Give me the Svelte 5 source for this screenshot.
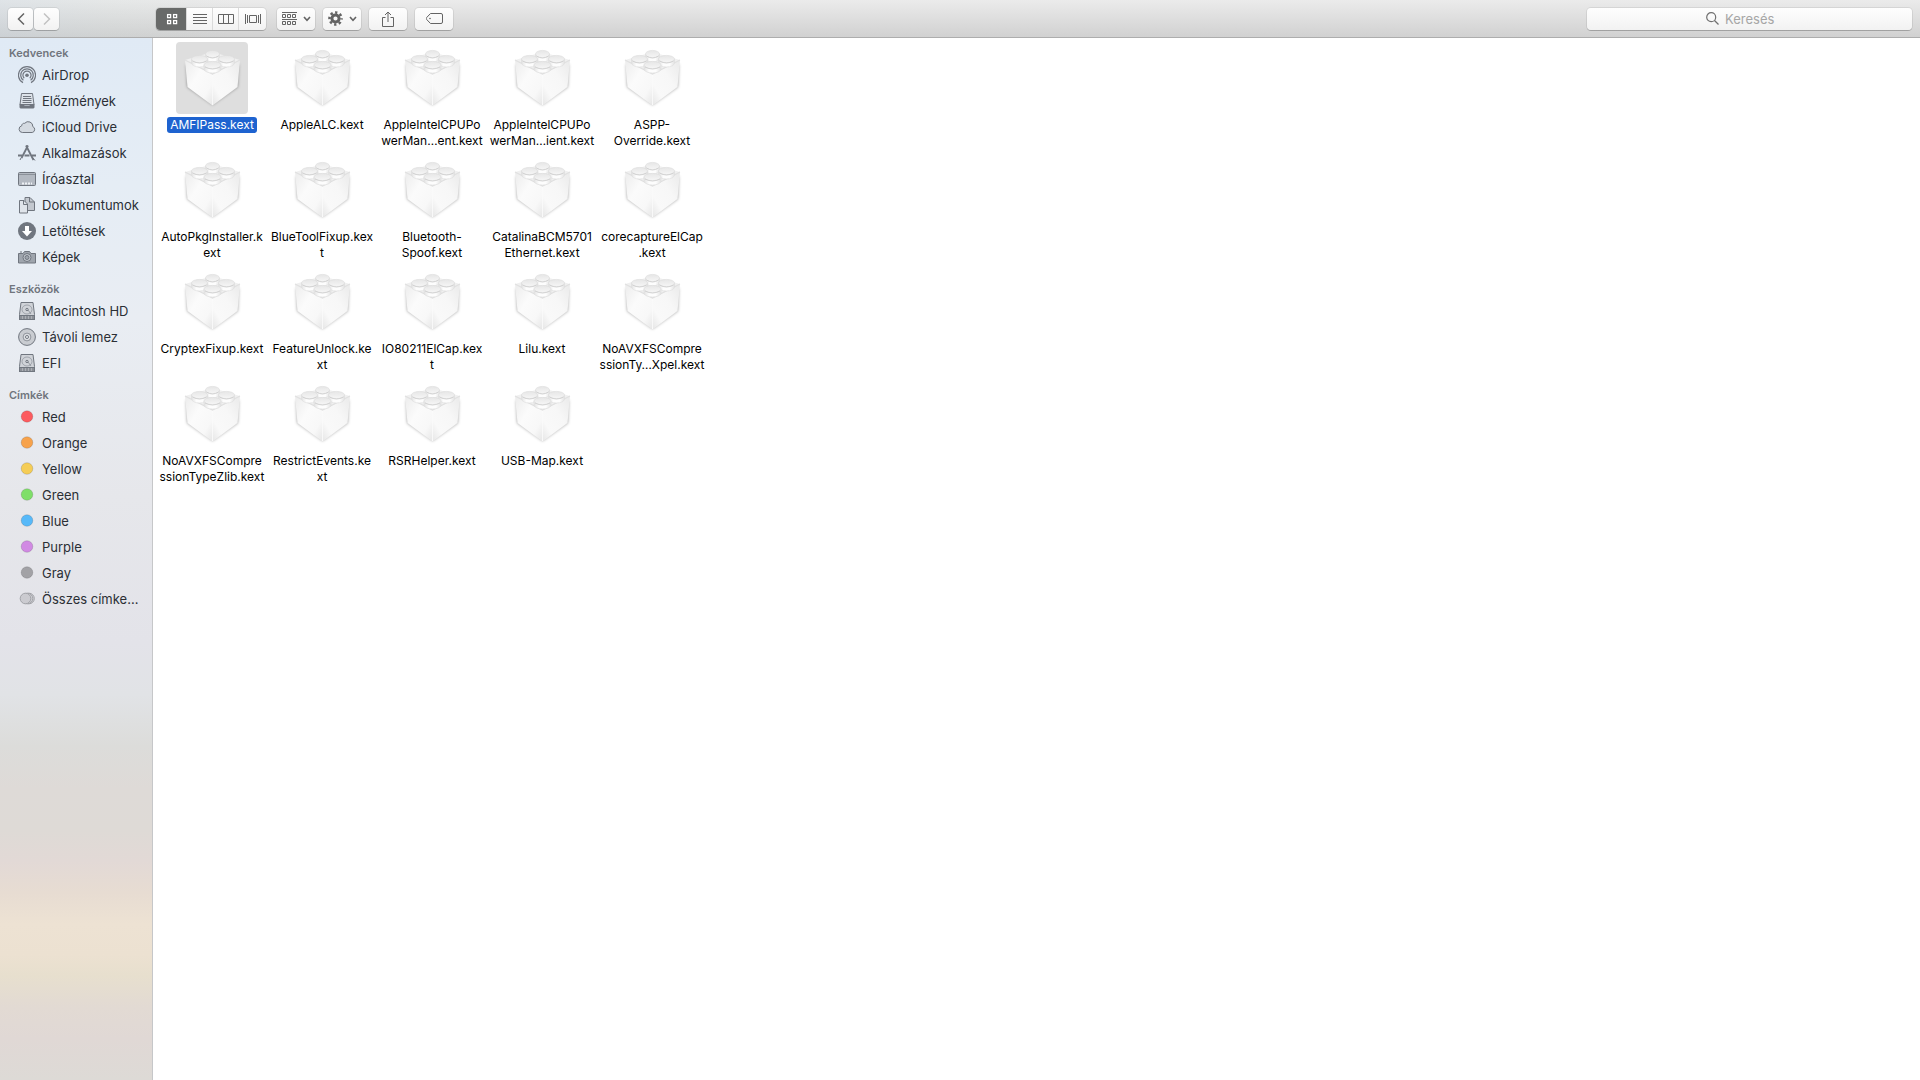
<script lang="ts">
	type Item = { icon: string; label: string; color?: string };
	type Section = { title: string; items: Item[] };

	const sections: Section[] = [
		{
			title: 'Kedvencek',
			items: [
				{ icon: 'airdrop', label: 'AirDrop' },
				{ icon: 'recents', label: 'Előzmények' },
				{ icon: 'cloud', label: 'iCloud Drive' },
				{ icon: 'apps', label: 'Alkalmazások' },
				{ icon: 'desktop', label: 'Íróasztal' },
				{ icon: 'documents', label: 'Dokumentumok' },
				{ icon: 'downloads', label: 'Letöltések' },
				{ icon: 'pictures', label: 'Képek' }
			]
		},
		{
			title: 'Eszközök',
			items: [
				{ icon: 'disk', label: 'Macintosh HD' },
				{ icon: 'disc', label: 'Távoli lemez' },
				{ icon: 'disk', label: 'EFI' }
			]
		},
		{
			title: 'Címkék',
			items: [
				{ icon: 'tag', label: 'Red', color: '#fc5b5f' },
				{ icon: 'tag', label: 'Orange', color: '#f7a24b' },
				{ icon: 'tag', label: 'Yellow', color: '#f5cd56' },
				{ icon: 'tag', label: 'Green', color: '#7fdf69' },
				{ icon: 'tag', label: 'Blue', color: '#57b9f9' },
				{ icon: 'tag', label: 'Purple', color: '#d18ae3' },
				{ icon: 'tag', label: 'Gray', color: '#a2a2a6' },
				{ icon: 'alltags', label: 'Összes címke…' }
			]
		}
	];

	// each file name is already split into the lines it wraps to
	const files: string[][] = [
		['AMFIPass.kext'],
		['AppleALC.kext'],
		['AppleIntelCPUPo', 'werMan…ent.kext'],
		['AppleIntelCPUPo', 'werMan…ient.kext'],
		['ASPP-', 'Override.kext'],
		['AutoPkgInstaller.k', 'ext'],
		['BlueToolFixup.kex', 't'],
		['Bluetooth-', 'Spoof.kext'],
		['CatalinaBCM5701', 'Ethernet.kext'],
		['corecaptureElCap', '.kext'],
		['CryptexFixup.kext'],
		['FeatureUnlock.ke', 'xt'],
		['IO80211ElCap.kex', 't'],
		['Lilu.kext'],
		['NoAVXFSCompre', 'ssionTy…Xpel.kext'],
		['NoAVXFSCompre', 'ssionTypeZlib.kext'],
		['RestrictEvents.ke', 'xt'],
		['RSRHelper.kext'],
		['USB-Map.kext']
	];

	const views = ['icons', 'list', 'columns', 'gallery'];

	let selected = $state(0);
	let view = $state('icons');
	let query = $state('');
</script>

{#snippet chevron()}
	<svg class="chevron" width="8" height="6" viewBox="0 0 8 6">
		<path d="M1 1l3 3.4L7 1" fill="none" stroke="currentColor" stroke-width="1.6" />
	</svg>
{/snippet}

{#snippet viewIcon(name: string)}
	<svg width="16" height="12" viewBox="0 0 16 12" fill="none" stroke="currentColor">
		{#if name === 'icons'}
			<g stroke-width="1.3">
				<rect x="3.6" y="1.6" width="3" height="3" />
				<rect x="9.6" y="1.6" width="3" height="3" />
				<rect x="3.6" y="7.6" width="3" height="3" />
				<rect x="9.6" y="7.6" width="3" height="3" />
			</g>
		{:else if name === 'list'}
			<path d="M1 1.5h14M1 4.5h14M1 7.5h14M1 10.5h14" />
		{:else if name === 'columns'}
			<path d="M.5 1.5h15v9H.5zM5.5 1.5v9M10.5 1.5v9" />
		{:else}
			<path d="M4.5 2.5h7v7h-7zM.5 1v10M2.5 2v8M13.5 2v8M15.5 1v10" />
		{/if}
	</svg>
{/snippet}

{#snippet sideIcon(item: Item)}
	<svg width="18" height="18" viewBox="0 0 18 18" fill="none" stroke="#70767f">
		{#if item.icon === 'airdrop'}
			<path d="M5 16.600a8.500 8.500 0 1 1 8 0" stroke-width="1.200" />
			<path d="M5.400 14.300a6.300 6.300 0 1 1 7.200 0" stroke-width="1.200" />
			<path d="M6.200 12.200a4.100 4.100 0 1 1 5.600 0" stroke-width="1.200" />
			<circle cx="9" cy="9.200" r="1.800" fill="#70767f" stroke="none" />
		{:else if item.icon === 'recents'}
			<path d="M3.500 1.500h11l1.500 11h-14z" fill="#dce2e9" />
			<path d="M5 4.500h8M5 6.500h8.500M4.500 8.500h9M4.500 10.500h9" />
			<path d="M1.500 12h4l1 1.500h5l1-1.500h4v3.500l-1 1h-13l-1-1z" fill="#70767f" stroke="none" />
		{:else if item.icon === 'cloud'}
			<path
				d="M4.300 14.500a3.400 3.400 0 0 1-.6-6.700 2.500 2.500 0 0 1 3-2.500 4.600 4.600 0 0 1 8.100 3.300 3.100 3.100 0 0 1-.6 5.900z"
				fill="#d4dae1"
			/>
		{:else if item.icon === 'apps'}
			<path d="M8 1.500l7.500 14.500M10 1.500L3.500 14" stroke-width="1.800" />
			<path d="M0 11.500h4M6.500 11.500h5M14 11.500h4" stroke-width="1.800" />
			<path d="M3 14l-1 2M15 14l2 2.500" />
		{:else if item.icon === 'desktop'}
			<rect x=".5" y="2.500" width="17" height="13" rx="1" fill="#b3b9c1" />
			<path d="M1 4.500h16" stroke-opacity=".6" />
			<path d="M4 13.500h2M7 13.500h2M10 13.500h2M13 13.500h1" stroke="#eef1f5" stroke-width="2" />
		{:else if item.icon === 'documents'}
			<path d="M7 1.500h5l4.500 4.500v8.500H7z" fill="#c3c8cf" />
			<path d="M11.500 1.500V6H16.500" />
			<path d="M1.500 4.500h4.500l3.500 3.500v9h-8z" fill="#dfe4ea" />
			<path d="M5.500 4.500v4h4" />
		{:else if item.icon === 'downloads'}
			<circle cx="9" cy="9" r="9" fill="#70767f" stroke="none" />
			<path d="M7 4h4v5h3l-5 5.500L4 9h3z" fill="#fff" stroke="none" />
		{:else if item.icon === 'pictures'}
			<path d="M.5 5.500h4.500l1.500-2h5l1.500 2h4.500v9.500H.5z" fill="#9fa5ad" />
			<path d="M2 4h2" />
			<circle cx="9" cy="9.500" r="4" fill="#c3c8ce" />
			<circle cx="9" cy="9.500" r="2" fill="#9fa5ad" />
		{:else if item.icon === 'disk'}
			<path d="M3 .5h12l1.500 12v5h-15v-5z" fill="#d0d3d8" />
			<rect x="1.500" y="13.500" width="15" height="4" fill="#8b8f96" />
			<ellipse cx="9" cy="7.500" rx="5" ry="4.500" stroke-opacity=".5" />
			<circle cx="9" cy="7.500" r="1.200" />
			<path d="M10 8l3 4" stroke-opacity=".6" />
			<path d="M4.500 14v3M7.500 14v3M10.500 14v3M13.500 14v3" stroke="#c2c5ca" stroke-opacity=".6" />
		{:else if item.icon === 'disc'}
			<circle cx="9" cy="9" r="8.400" fill="#c9ccd1" />
			<circle cx="9" cy="9" r="3.900" fill="#dcdee2" stroke-opacity=".7" />
			<circle cx="9" cy="9" r="1.500" fill="#f5f6f8" />
		{:else if item.icon === 'tag'}
			<circle cx="9" cy="8.500" r="5.800" fill={item.color} stroke="#000" stroke-opacity=".14" />
		{:else}
			<circle cx="11" cy="8.500" r="5.300" fill="#d3d3d7" stroke="#a2a3a8" />
			<circle cx="9.500" cy="8.500" r="5.300" fill="#cdcdd2" stroke="#a2a3a8" />
			<circle cx="7.500" cy="8.500" r="5.300" fill="#cbcbd0" stroke="#a2a3a8" />
		{/if}
	</svg>
{/snippet}

{#snippet stud(x: number, y: number, rx: number)}
	<path
		d="M{x - rx} {y}v4a{rx} 4 0 0 0 {rx * 2} 0v-4z"
		fill="url(#stud-side)"
		stroke="#dedede"
		stroke-width=".6"
	/>
	<ellipse cx={x} cy={y} {rx} ry="3.6" fill="url(#stud-top)" stroke="#dcdcdc" stroke-width=".6" />
	<path
		d="M{x - rx + 1} {y + 2}q{rx - 1} 4 {rx * 2 - 2} 0"
		fill="none"
		stroke="#cfcfcf"
		stroke-width=".9"
	/>
{/snippet}

<svg class="defs" width="0" height="0" aria-hidden="true">
	<defs>
		<linearGradient id="face-left" x1="0" y1="0" x2="1" y2="1">
			<stop offset="0" stop-color="#ececec" />
			<stop offset=".4" stop-color="#fbfbfb" />
			<stop offset=".75" stop-color="#f8f8f8" />
			<stop offset="1" stop-color="#e6e6e6" />
		</linearGradient>
		<linearGradient id="face-right" x1="1" y1="0" x2="0" y2="1">
			<stop offset="0" stop-color="#eaeaea" />
			<stop offset=".4" stop-color="#f7f7f7" />
			<stop offset=".75" stop-color="#f9f9f9" />
			<stop offset="1" stop-color="#e6e6e6" />
		</linearGradient>
		<linearGradient id="stud-side" x1="0" y1="0" x2="1" y2="0">
			<stop offset="0" stop-color="#e2e2e2" />
			<stop offset=".3" stop-color="#fdfdfd" />
			<stop offset=".7" stop-color="#fdfdfd" />
			<stop offset="1" stop-color="#e2e2e2" />
		</linearGradient>
		<linearGradient id="stud-top" x1="0" y1="0" x2="0" y2="1">
			<stop offset="0" stop-color="#e6e6e6" />
			<stop offset="1" stop-color="#f6f6f6" />
		</linearGradient>
		<filter id="brick-shadow" x="-20%" y="-20%" width="140%" height="140%">
			<feGaussianBlur stdDeviation="1.800" />
		</filter>
		<symbol id="brick" viewBox="0 0 72 72">
			<path
				d="M10 22L36.500 34 63 22l-1 23-25.500 18L11 45z"
				fill="#000"
				fill-opacity=".32"
				filter="url(#brick-shadow)"
			/>
			<path d="M9 18L36.500 10 64 18 36.500 32z" fill="#f0f0f0" />
			<path d="M9 18L36.500 32v31.500L11.500 45z" fill="url(#face-left)" />
			<path d="M64 18L36.500 32v31.500l25-18.500z" fill="url(#face-right)" />
			<path d="M9 18L36.500 32 64 18" fill="none" stroke="#e0e0e0" stroke-width="1.400" />
			<path d="M36.500 33v30" stroke="#fff" stroke-opacity=".8" />
			{@render stud(36.5, 12, 7)}
			{@render stud(23.5, 17, 8)}
			{@render stud(50.5, 17, 8)}
			{@render stud(36.5, 23, 8.5)}
		</symbol>
	</defs>
</svg>

<div class="window">
	<header class="toolbar">
		<nav class="history" aria-label="Előzmények">
			<button type="button" aria-label="Vissza">
				<svg width="8" height="14" viewBox="0 0 8 14">
					<path d="M7 1.500L1.500 7 7 12.500" fill="none" stroke="currentColor" stroke-width="1.500" />
				</svg>
			</button>
			<button type="button" aria-label="Előre" disabled>
				<svg width="8" height="14" viewBox="0 0 8 14">
					<path d="M1 1.500L6.500 7 1 12.500" fill="none" stroke="currentColor" stroke-width="1.500" />
				</svg>
			</button>
		</nav>

		<div class="tools">
			<div class="views">
				{#each views as name (name)}
					<button
						type="button"
						class:active={view === name}
						aria-label={name}
						aria-pressed={view === name}
						onclick={() => (view = name)}
					>
						{@render viewIcon(name)}
					</button>
				{/each}
			</div>

			<button type="button" class="tool" aria-label="Csoportosítás">
				<svg width="15" height="14" viewBox="0 0 15 14" fill="none" stroke="currentColor">
					<path d="M0 .5h15M0 7.500h15" />
					<path d="M.5 2.500h3v3h-3zM5.500 2.500h3v3h-3zM10.500 2.500h3v3h-3z" />
					<path d="M.5 9.500h3v3h-3zM5.500 9.500h3v3h-3zM10.500 9.500h3v3h-3z" />
				</svg>
				{@render chevron()}
			</button>
			<button type="button" class="tool" aria-label="Műveletek">
				<svg width="15" height="15" viewBox="0 0 15 15" fill="none" stroke="currentColor">
					<circle cx="7.500" cy="7.500" r="3.600" stroke-width="3" />
					<circle cx="7.500" cy="7.500" r="6" stroke-width="2.600" stroke-dasharray="2.300 2.412" stroke-dashoffset="1.150" />
				</svg>
				{@render chevron()}
			</button>
			<button type="button" class="tool" aria-label="Megosztás">
				<svg width="12" height="16" viewBox="0 0 12 16" fill="none" stroke="currentColor">
					<path d="M3.500 6.500h-3v9h11v-9h-3M6 11V1M3 4l3-3 3 3" />
				</svg>
			</button>
			<button type="button" class="tool" aria-label="Címkék szerkesztése">
				<svg width="17" height="11" viewBox="0 0 17 11" fill="none" stroke="currentColor">
					<path d="M4.500.5H15a1.500 1.500 0 0 1 1.500 1.500v7a1.500 1.500 0 0 1-1.500 1.500H4.500L.700 6.500q-.7-1 0-2z" />
					<circle cx="4" cy="5.500" r=".8" fill="currentColor" stroke="none" />
				</svg>
			</button>
		</div>

		<label class="search">
			<svg width="13" height="13" viewBox="0 0 13 13" fill="none" stroke="#707070" stroke-width="1.200">
				<circle cx="5.200" cy="5.200" r="4.500" />
				<path d="M8.500 8.500l4 4" />
			</svg>
			<input type="text" placeholder="Keresés" aria-label="Keresés" bind:value={query} />
		</label>
	</header>

	<div class="body">
		<aside class="sidebar">
			{#each sections as section (section.title)}
				<section>
					<h2>{section.title}</h2>
					<ul>
						{#each section.items as item (item.label)}
							<li>
								<button type="button">
									{@render sideIcon(item)}
									<span>{item.label}</span>
								</button>
							</li>
						{/each}
					</ul>
				</section>
			{/each}
		</aside>

		<main class="files">
			{#each files as lines, i (i)}
				<button
					type="button"
					class="file"
					class:selected={selected === i}
					onclick={() => (selected = i)}
				>
					<svg class="thumb" width="72" height="72"><use href="#brick" /></svg>
					<span class="name">
						{#each lines as line, n (n)}{#if n > 0}<br />{/if}{line}{/each}
					</span>
				</button>
			{/each}
		</main>
	</div>
</div>

<style>
	:global(body) {
		margin: 0;
	}

	.defs {
		position: absolute;
	}

	.window {
		display: flex;
		flex-direction: column;
		min-height: 100vh;
		background: #fff;
		font-family: Inter, 'Noto Sans', sans-serif;
		font-size: 13px;
		color: #2b2f35;
	}

	button {
		display: flex;
		align-items: center;
		margin: 0;
		padding: 0;
		border: 0;
		background: none;
		font: inherit;
		color: inherit;
	}

	svg {
		flex: none;
	}

	/* toolbar */
	.toolbar {
		display: flex;
		align-items: center;
		box-sizing: border-box;
		height: 38px;
		padding: 0 8px;
		border-bottom: 1px solid #adadad;
		background:
			linear-gradient(90deg, rgba(190, 208, 222, 0.25), rgba(200, 215, 215, 0.15) 110px, transparent 240px),
			linear-gradient(#ebebeb, #d1d1d1);
	}

	.history {
		display: flex;
		gap: 1px;
		width: 148px;
	}

	.history button,
	.views,
	.tool,
	.search {
		height: 22px;
		border-radius: 4px;
		background: linear-gradient(#fefefe, #f2f2f2);
		box-shadow:
			0 0 0 1px rgba(0, 0, 0, 0.07),
			0 1px 0 rgba(0, 0, 0, 0.18);
	}

	.history button {
		justify-content: center;
		width: 25px;
		color: #636363;
	}

	.history button:disabled {
		color: #c2c2c2;
	}

	.tools {
		display: flex;
		gap: 8px;
		color: #646464;
	}

	.views {
		display: flex;
		margin-right: 3px;
		overflow: hidden;
	}

	.views button {
		justify-content: center;
		width: 26px;
		border-left: 1px solid #dadada;
	}

	.views button:first-child {
		width: 30px;
		padding-left: 2px;
		border-left: 0;
	}

	.views button:last-child {
		width: 28px;
	}

	.views button.active {
		background: #686a69;
		color: #fff;
	}

	.tool {
		justify-content: center;
		gap: 6px;
		width: 38px;
	}

	.search {
		display: flex;
		align-items: center;
		justify-content: center;
		gap: 6px;
		width: 325px;
		margin-left: auto;
	}

	.search input {
		width: 68px;
		padding: 0;
		border: 0;
		outline: 0;
		background: none;
		font: inherit;
		color: #333;
	}

	.search input::placeholder {
		color: #a6a6a6;
		opacity: 1;
	}

	.body {
		display: flex;
		flex: 1;
	}

	/* sidebar */
	.sidebar {
		flex: none;
		box-sizing: border-box;
		width: 153px;
		padding-top: 7px;
		border-right: 1px solid #c6c7c9;
		background: linear-gradient(
			#e0eaf5 0%,
			#e5edf5 14%,
			#e9edf3 27%,
			#e6e7eb 44%,
			#e3e3e9 58%,
			#e1e3e6 63%,
			#dcdcda 68%,
			#dedad7 72%,
			#dedad6 76%,
			#e2d9d6 79%,
			#e7dcd2 82%,
			#ede2d3 85%,
			#ece1d1 88%,
			#e7dfce 90%,
			#e2dad3 93%,
			#e0d8d5 96%,
			#dddad6 100%
		);
	}

	section {
		margin-bottom: 11px;
	}

	h2 {
		margin: 0;
		padding-left: 9px;
		font-size: 11px;
		font-weight: 600;
		line-height: 17px;
		color: #70757d;
	}

	ul {
		margin: 0;
		padding: 0;
		list-style: none;
	}

	li button {
		gap: 6px;
		width: 100%;
		height: 26px;
		padding-left: 18px;
		white-space: nowrap;
	}

	/* icon grid */
	.files {
		display: grid;
		grid-template-columns: repeat(5, 110px);
		grid-auto-rows: 112px;
		align-content: start;
		flex: 1;
		padding: 4px 4px 0;
	}

	.file {
		flex-direction: column;
		gap: 3px;
		font-size: 12px;
		line-height: 16px;
		color: #000;
	}

	.thumb {
		border-radius: 4px;
	}

	.name {
		padding: 0 3px;
		border-radius: 3px;
		white-space: nowrap;
	}

	.file.selected .thumb {
		background: #dedede;
	}

	.file.selected .name {
		background: #1e63d0;
		color: #fff;
	}
</style>
